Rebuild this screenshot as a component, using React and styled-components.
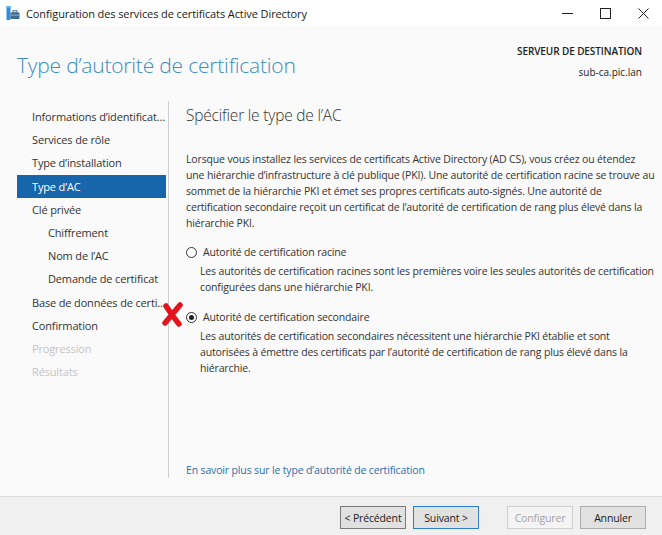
import React from "react";
import styled, { createGlobalStyle } from "styled-components";

const Global = createGlobalStyle`
  html, body { margin: 0; padding: 0; background: #fff; }
  body { font-family: "Open Sans", "Noto Sans", sans-serif; }
  #root { width: 662px; height: 535px; }
`;

const Window = styled.div`
  width: 662px;
  height: 535px;
  display: flex;
  flex-direction: column;
  background: #fff;
  overflow: hidden;
  color: #333;
`;

const TitleBar = styled.div`
  height: 26px;
  display: flex;
  align-items: center;
  background: #fff;
  padding-left: 6px;
`;

const TitleText = styled.div`
  font-size: 11px;
  color: #1a1a1a;
  margin-left: 6px;
  flex: 1;
  letter-spacing: -0.1px;
`;

const WinButtons = styled.div`
  display: flex;
  height: 26px;
`;

const WinBtn = styled.div`
  width: 38px;
  height: 26px;
  display: flex;
  align-items: center;
  justify-content: center;
`;

const Header = styled.div`
  height: 70px;
  background: #fafafa;
  display: flex;
  justify-content: space-between;
  padding: 0 20px 0 17px;
`;

const PageTitle = styled.h1`
  margin: 25px 0 0 0;
  font-weight: 300;
  font-size: 21px;
  color: #3a8cc2;
  letter-spacing: -0.2px;
`;

const ServerInfo = styled.div`
  text-align: right;
  margin-top: 15px;
  font-size: 10px;
  line-height: 21px;
  color: #222;
`;

const ServerLabel = styled.div`
  font-weight: 600;
  letter-spacing: -0.1px;
`;

const Body = styled.div`
  flex: 1;
  display: flex;
  background: #fafafa;
  padding-top: 5px;
  padding-bottom: 18px;
`;

const Nav = styled.div`
  width: 149px;
  margin-left: 17px;
  padding-top: 4px;
  border-right: 1px solid #cfcfcf;
  padding-right: 2px;
  margin-right: 17px;
`;

const NavItem = styled.div`
  height: 23.2px;
  line-height: 23px;
  font-size: 11px;
  padding-left: ${(p) => (p.$sub ? 31 : 15)}px;
  color: ${(p) => (p.$selected ? "#fff" : p.$disabled ? "#c4c4c4" : "#333")};
  background: ${(p) => (p.$selected ? "#1766ac" : "transparent")};
  white-space: nowrap;
  overflow: hidden;
  text-overflow: ellipsis;
  letter-spacing: -0.15px;
`;

const Content = styled.div`
  flex: 1;
  position: relative;
  display: flex;
  flex-direction: column;
  padding-right: 16px;
`;

const Heading = styled.h2`
  margin: 3px 0 0 0;
  font-weight: 300;
  font-size: 15.5px;
  color: #333;
  letter-spacing: -0.2px;
`;

const Paragraph = styled.p`
  margin: 25px 0 0 0;
  font-size: 10.5px;
  line-height: 16px;
  color: #333;
  white-space: nowrap;
  letter-spacing: -0.15px;
`;

const Option = styled.div`
  margin-top: ${(p) => p.$top}px;
`;

const RadioRow = styled.label`
  display: flex;
  align-items: center;
  font-size: 10.5px;
  height: 16px;
  color: #333;
  letter-spacing: -0.15px;
`;

const Radio = styled.span`
  width: 9px;
  height: 9px;
  border: 1px solid #333;
  border-radius: 50%;
  background: #fff;
  margin-right: 6px;
  display: flex;
  align-items: center;
  justify-content: center;
  &::after {
    content: "";
    display: ${(p) => (p.$checked ? "block" : "none")};
    width: 5px;
    height: 5px;
    border-radius: 50%;
    background: #222;
  }
`;

const OptionDesc = styled.div`
  margin: 3px 0 0 14px;
  font-size: 10.5px;
  line-height: 16px;
  color: #333;
  white-space: nowrap;
  letter-spacing: -0.15px;
`;

const Spacer = styled.div`
  flex: 1;
`;

const Link = styled.a`
  font-size: 10.5px;
  color: #2b6eb0;
  text-decoration: none;
  letter-spacing: -0.15px;
  margin-bottom: 1px;
`;

const Cross = styled.svg`
  position: absolute;
  left: -24px;
  top: 201px;
`;

const Footer = styled.div`
  height: 39px;
  border-top: 1px solid #dcdcdc;
  background: #f0f0f0;
  display: flex;
  align-items: flex-start;
  justify-content: flex-end;
  padding: 9px 16px 0 0;
  box-sizing: border-box;
  gap: 7px;
`;

const Button = styled.button`
  width: 66px;
  height: 23px;
  box-sizing: border-box;
  font-family: inherit;
  font-size: 10.5px;
  letter-spacing: -0.15px;
  padding: 0;
  background: ${(p) => (p.disabled ? "#f4f4f4" : "#e1e1e1")};
  color: ${(p) => (p.disabled ? "#a3a3a3" : "#1a1a1a")};
  border: 1px solid
    ${(p) => (p.$primary ? "#2a7fd4" : p.disabled ? "#cfcfcf" : p.$dark ? "#7a7a7a" : "#adadad")};
  margin-left: ${(p) => p.$gap || 0}px;
`;

const navItems = [
  { label: "Informations d’identification" },
  { label: "Services de rôle" },
  { label: "Type d’installation" },
  { label: "Type d’AC", selected: true },
  { label: "Clé privée" },
  { label: "Chiffrement", sub: true },
  { label: "Nom de l’AC", sub: true },
  { label: "Demande de certificat", sub: true },
  { label: "Base de données de certificats" },
  { label: "Confirmation" },
  { label: "Progression", disabled: true },
  { label: "Résultats", disabled: true },
];

function AppIcon() {
  return (
    <svg width="14" height="14" viewBox="0 0 14 14">
      <rect x="0.5" y="0" width="4" height="14" fill="#2f8ddb" />
      <rect x="0.5" y="0" width="4" height="2" fill="#5fb0f0" />
      <rect x="4.5" y="6.5" width="9" height="6.5" rx="0.8" fill="#3f6d8f" />
      <rect x="7" y="4.8" width="4" height="2" fill="none" stroke="#3f6d8f" strokeWidth="1" />
      <rect x="4.5" y="8.6" width="9" height="1" fill="#8fb3cf" />
    </svg>
  );
}

export default function App() {
  return (
    <>
      <Global />
      <Window>
        <TitleBar>
          <AppIcon />
          <TitleText>Configuration des services de certificats Active Directory</TitleText>
          <WinButtons>
            <WinBtn>
              <svg width="11" height="11" viewBox="0 0 11 11">
                <line x1="0" y1="5.5" x2="11" y2="5.5" stroke="#222" strokeWidth="1" />
              </svg>
            </WinBtn>
            <WinBtn>
              <svg width="11" height="11" viewBox="0 0 11 11">
                <rect x="0.5" y="0.5" width="10" height="10" fill="none" stroke="#222" strokeWidth="1" />
              </svg>
            </WinBtn>
            <WinBtn>
              <svg width="11" height="11" viewBox="0 0 11 11">
                <path d="M0.5 0.5 L10.5 10.5 M10.5 0.5 L0.5 10.5" stroke="#222" strokeWidth="1" />
              </svg>
            </WinBtn>
          </WinButtons>
        </TitleBar>
        <Header>
          <PageTitle>Type d’autorité de certification</PageTitle>
          <ServerInfo>
            <ServerLabel>SERVEUR DE DESTINATION</ServerLabel>
            <div>sub-ca.pic.lan</div>
          </ServerInfo>
        </Header>
        <Body>
          <Nav>
            {navItems.map((it) => (
              <NavItem
                key={it.label}
                $sub={it.sub}
                $selected={it.selected}
                $disabled={it.disabled}
              >
                {it.label}
              </NavItem>
            ))}
          </Nav>
          <Content>
            <Heading>Spécifier le type de l’AC</Heading>
            <Paragraph>
              Lorsque vous installez les services de certificats Active Directory (AD CS), vous créez ou étendez
              <br />
              une hiérarchie d’infrastructure à clé publique (PKI). Une autorité de certification racine se trouve au
              <br />
              sommet de la hiérarchie PKI et émet ses propres certificats auto-signés. Une autorité de
              <br />
              certification secondaire reçoit un certificat de l’autorité de certification de rang plus élevé dans la
              <br />
              hiérarchie PKI.
            </Paragraph>
            <Option $top={13}>
              <RadioRow>
                <Radio />
                Autorité de certification racine
              </RadioRow>
              <OptionDesc>
                Les autorités de certification racines sont les premières voire les seules autorités de certification
                <br />
                configurées dans une hiérarchie PKI.
              </OptionDesc>
            </Option>
            <Option $top={14}>
              <RadioRow>
                <Radio $checked />
                Autorité de certification secondaire
              </RadioRow>
              <OptionDesc>
                Les autorités de certification secondaires nécessitent une hiérarchie PKI établie et sont
                <br />
                autorisées à émettre des certificats par l’autorité de certification de rang plus élevé dans la
                <br />
                hiérarchie.
              </OptionDesc>
            </Option>
            <Spacer />
            <Link href="#">En savoir plus sur le type d’autorité de certification</Link>
            <Cross width="22" height="26" viewBox="0 0 22 26">
              <path
                d="M4 4 C8 10 12 16 17 22 M18 3 C13 9 8 15 3 21"
                stroke="#e3141b"
                strokeWidth="5.5"
                strokeLinecap="round"
                fill="none"
              />
            </Cross>
          </Content>
        </Body>
        <Footer>
          <Button $dark>&lt; Précédent</Button>
          <Button $primary>Suivant &gt;</Button>
          <Button disabled $gap={21}>Configurer</Button>
          <Button>Annuler</Button>
        </Footer>
      </Window>
    </>
  );
}
